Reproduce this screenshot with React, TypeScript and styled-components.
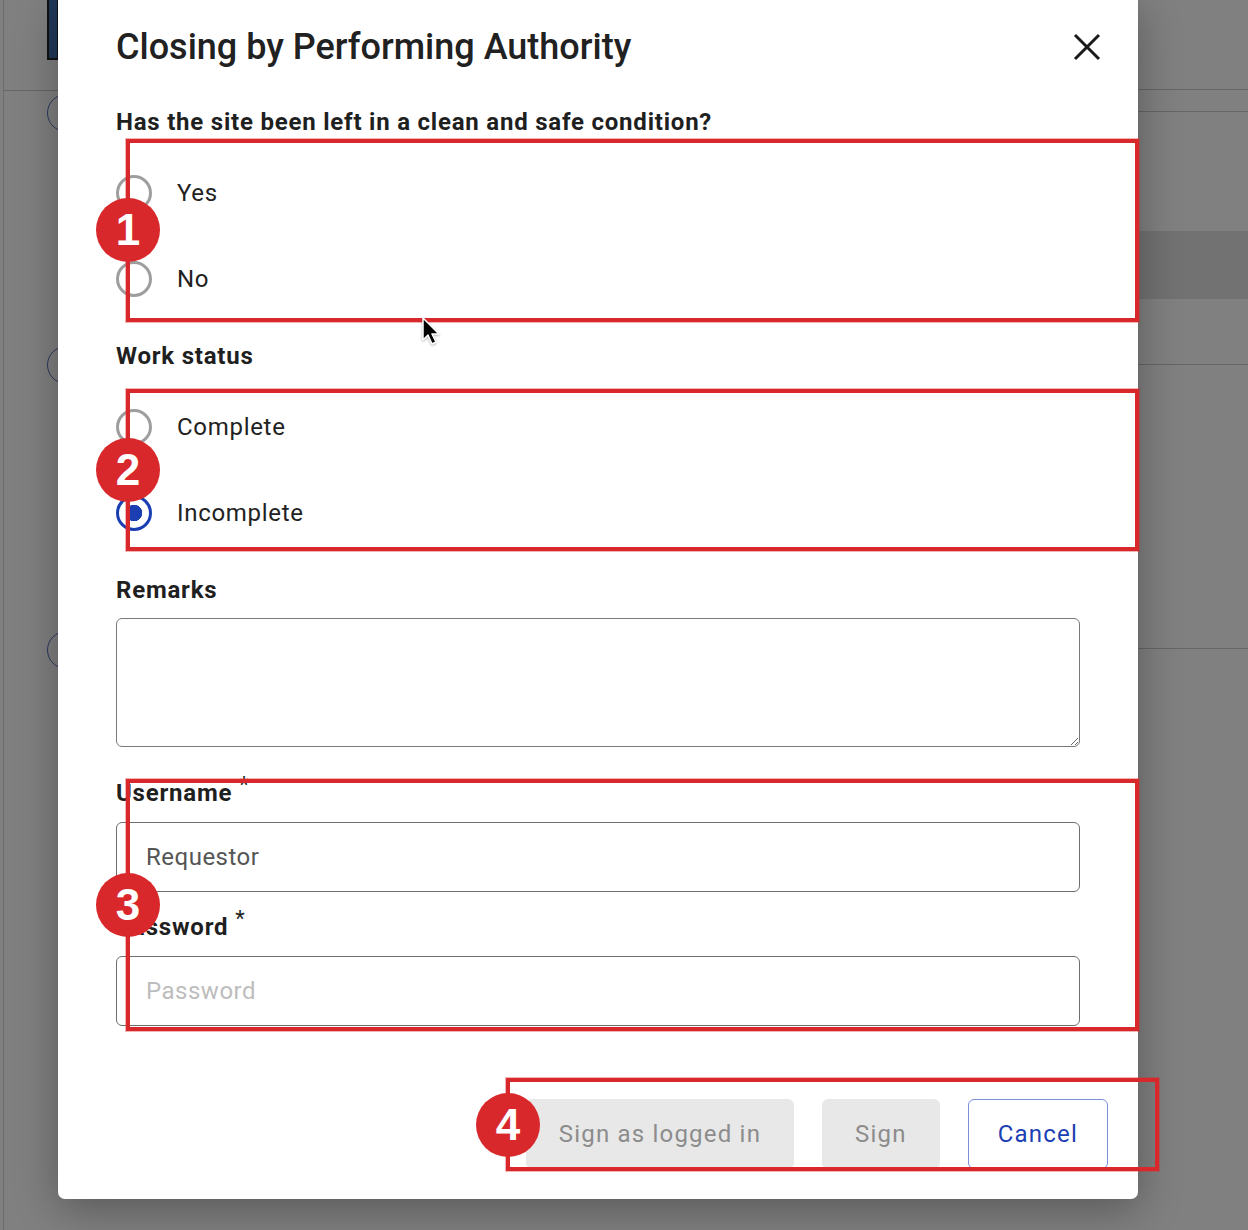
import * as React from 'react';
import styled, { createGlobalStyle } from 'styled-components';

const GlobalStyle = createGlobalStyle`
  html, body {
    margin: 0;
    padding: 0;
    background: #808080;
    font-family: Roboto, 'Liberation Sans', Arial, sans-serif;
  }
  * { box-sizing: border-box; }
`;

const Page = styled.div`
  position: relative;
  width: 1248px;
  height: 1230px;
  overflow: hidden;
  background: #808080;
`;

/* ---------- dimmed app behind the dialog ---------- */

const Backdrop = styled.div`
  display: flex;
  height: 100%;
  margin-left: 3px;
  border-left: 1px solid #6c6c6c;
`;

const SideColumn = styled.div`
  position: relative;
  flex: 0 0 54px;
`;

const SideHeader = styled.div`
  height: 91px;
  border-bottom: 1px solid #666;
`;

const MainColumn = styled.div`
  flex: 1;
  display: flex;
  flex-direction: column;
`;

const BgRow = styled.div<{ $h: number; $line?: boolean; $shade?: boolean }>`
  flex: 0 0 ${(p) => p.$h}px;
  background: ${(p) => (p.$shade ? '#727272' : 'transparent')};
  border-bottom: ${(p) => (p.$line ? '1px solid #666' : '0')};
`;

const NavyBlock = styled.div`
  width: 12px;
  height: 60px;
  margin-left: 43px;
  background: #22395a;
  border: 2px solid #111;
  border-top: 0;
`;

const TimelineDot = styled.span<{ $y: number }>`
  position: absolute;
  left: 43px;
  top: ${(p) => p.$y - 19}px;
  width: 38px;
  height: 38px;
  border-radius: 50%;
  border: 1px solid #2a3a5e;
`;

/* ---------- dialog ---------- */

const Modal = styled.div`
  position: absolute;
  left: 58px;
  top: 0;
  width: 1080px;
  background: #fff;
  border-radius: 0 0 7px 7px;
  box-shadow: 0 10px 44px rgba(0, 0, 0, 0.32);
  padding: 0 58px 30px;
  color: #1f1f1f;
`;

const Header = styled.div`
  display: flex;
  align-items: center;
  justify-content: space-between;
  height: 94px;
  margin-right: -27px;
`;

const Title = styled.h2`
  margin: 0;
  font-size: 36px;
  line-height: 40px;
  font-weight: 500;
  color: #212121;
`;

const CloseButton = styled.button`
  width: 40px;
  height: 40px;
  padding: 0;
  border: 0;
  background: none;
  display: flex;
  align-items: center;
  justify-content: center;
  cursor: pointer;
`;

const Section = styled.div<{ $gap?: number }>`
  margin-top: ${(p) => p.$gap ?? 20}px;
`;

const FieldLabel = styled.div`
  font-size: 24px;
  line-height: 28px;
  font-weight: 700;
  letter-spacing: 0.78px;
  color: #1f1f1f;
  margin-bottom: 14px;
`;

const Required = styled.span`
  font-weight: 400;
  font-size: 22px;
  margin-left: 7px;
  position: relative;
  top: -9px;
`;

const RadioRow = styled.label`
  display: flex;
  align-items: center;
  height: 86px;
  gap: 25px;
  font-size: 24px;
  color: #222;
  letter-spacing: 0.7px;
`;

const RadioInput = styled.input`
  appearance: none;
  margin: 0;
  flex: 0 0 36px;
  width: 36px;
  height: 36px;
  border-radius: 50%;
  border: 3px solid #9e9e9e;
  background: #fff;

  &:checked {
    border-color: #1b3fb3;
    background: radial-gradient(circle, #1b3fb3 0 8px, #fff 8.5px);
  }
`;

const TextArea = styled.textarea`
  display: block;
  width: 100%;
  height: 129px;
  border: 1px solid #7a7a7a;
  border-radius: 6px;
  resize: vertical;
  font: inherit;
`;

const TextInput = styled.input`
  display: block;
  width: 100%;
  height: 70px;
  padding: 0 29px;
  border: 1px solid #6e6e6e;
  border-radius: 6px;
  font-family: Roboto, 'Liberation Sans', Arial, sans-serif;
  font-size: 24px;
  color: #555;
  letter-spacing: 0.5px;

  &::placeholder {
    color: #bdbdbd;
  }
`;

const Footer = styled.div`
  display: flex;
  justify-content: flex-end;
  gap: 28px;
  margin-top: 73px;
  margin-right: -28px;
`;

const Button = styled.button<{ $variant?: 'disabled' | 'outline' }>`
  height: 70px;
  border-radius: 6px;
  font-family: Roboto, 'Liberation Sans', Arial, sans-serif;
  font-size: 24px;
  letter-spacing: 1.2px;
  border: 1px solid ${(p) => (p.$variant === 'outline' ? '#7d8fda' : '#e8e8e8')};
  background: ${(p) => (p.$variant === 'outline' ? '#fff' : '#e8e8e8')};
  color: ${(p) => (p.$variant === 'outline' ? '#1b3fb3' : '#8c8c8c')};
  padding: 0 ${(p) => (p.$variant === 'outline' ? 29 : 32)}px;
`;

/* ---------- annotations drawn over the screenshot ---------- */

const Marker = styled.div<{ $x: number; $y: number; $w: number; $h: number }>`
  position: absolute;
  left: ${(p) => p.$x}px;
  top: ${(p) => p.$y}px;
  width: ${(p) => p.$w}px;
  height: ${(p) => p.$h}px;
  border: 4px solid #d9282b;
  box-shadow: 0 0 0 1px rgba(217, 40, 43, 0.35);
  pointer-events: none;
`;

const Badge = styled.div<{ $x: number; $y: number }>`
  position: absolute;
  left: ${(p) => p.$x - 32}px;
  top: ${(p) => p.$y - 32}px;
  width: 64px;
  height: 64px;
  border-radius: 50%;
  background: #d9282b;
  color: #fff;
  font-family: 'Liberation Sans', Arial, sans-serif;
  font-weight: 700;
  font-size: 44px;
  line-height: 64px;
  text-align: center;
`;

const Cursor = styled.svg`
  position: absolute;
  left: 421px;
  top: 317px;
  filter: drop-shadow(0 1px 1px rgba(0, 0, 0, 0.3));
`;

const markers = [
  { x: 126, y: 139, w: 1013, h: 183, n: 1, bx: 128, by: 230 },
  { x: 126, y: 389, w: 1013, h: 162, n: 2, bx: 128, by: 470 },
  { x: 126, y: 779, w: 1013, h: 252, n: 3, bx: 128, by: 905 },
  { x: 506, y: 1078, w: 653, h: 93, n: 4, bx: 508, by: 1125 },
];

const App: React.FC = () => (
  <Page>
    <GlobalStyle />
    <Backdrop>
      <SideColumn>
        <SideHeader>
          <NavyBlock />
        </SideHeader>
        <TimelineDot $y={113} />
        <TimelineDot $y={365} />
        <TimelineDot $y={650} />
      </SideColumn>
      <MainColumn>
        <BgRow $h={90} $line />
        <BgRow $h={22} $line />
        <BgRow $h={119} />
        <BgRow $h={68} $shade />
        <BgRow $h={66} $line />
        <BgRow $h={284} $line />
        <BgRow $h={580} />
      </MainColumn>
    </Backdrop>

    <Modal>
      <Header>
        <Title>Closing by Performing Authority</Title>
        <CloseButton aria-label="Close">
          <svg width="28" height="28" viewBox="0 0 28 28">
            <path d="M2 2 L26 26 M26 2 L2 26" stroke="#1a1a1a" strokeWidth="3" />
          </svg>
        </CloseButton>
      </Header>

      <Section $gap={14}>
        <FieldLabel>Has the site been left in a clean and safe condition?</FieldLabel>
        <RadioRow>
          <RadioInput type="radio" name="clean" />
          Yes
        </RadioRow>
        <RadioRow>
          <RadioInput type="radio" name="clean" />
          No
        </RadioRow>
      </Section>

      <Section $gap={20}>
        <FieldLabel>Work status</FieldLabel>
        <RadioRow>
          <RadioInput type="radio" name="status" />
          Complete
        </RadioRow>
        <RadioRow>
          <RadioInput type="radio" name="status" defaultChecked />
          Incomplete
        </RadioRow>
      </Section>

      <Section $gap={20}>
        <FieldLabel>Remarks</FieldLabel>
        <TextArea />
      </Section>

      <Section $gap={32}>
        <FieldLabel>
          Username<Required>*</Required>
        </FieldLabel>
        <TextInput defaultValue="Requestor" />
      </Section>

      <Section $gap={21}>
        <FieldLabel>
          Password<Required>*</Required>
        </FieldLabel>
        <TextInput type="password" placeholder="Password" />
      </Section>

      <Footer>
        <Button $variant="disabled">Sign as logged in</Button>
        <Button $variant="disabled">Sign</Button>
        <Button $variant="outline">Cancel</Button>
      </Footer>
    </Modal>

    {markers.map((m) => (
      <Marker key={m.n} $x={m.x} $y={m.y} $w={m.w} $h={m.h} />
    ))}
    {markers.map((m) => (
      <Badge key={m.n} $x={m.bx} $y={m.by}>
        {m.n}
      </Badge>
    ))}

    <Cursor width="22" height="30" viewBox="0 0 22 30">
      <path
        d="M2 1 L2 23 L7 18 L11 27 L15 25 L11 17 L18 17 Z"
        fill="#000"
        stroke="#fff"
        strokeWidth="1.5"
        strokeLinejoin="round"
      />
    </Cursor>
  </Page>
);

export default App;
